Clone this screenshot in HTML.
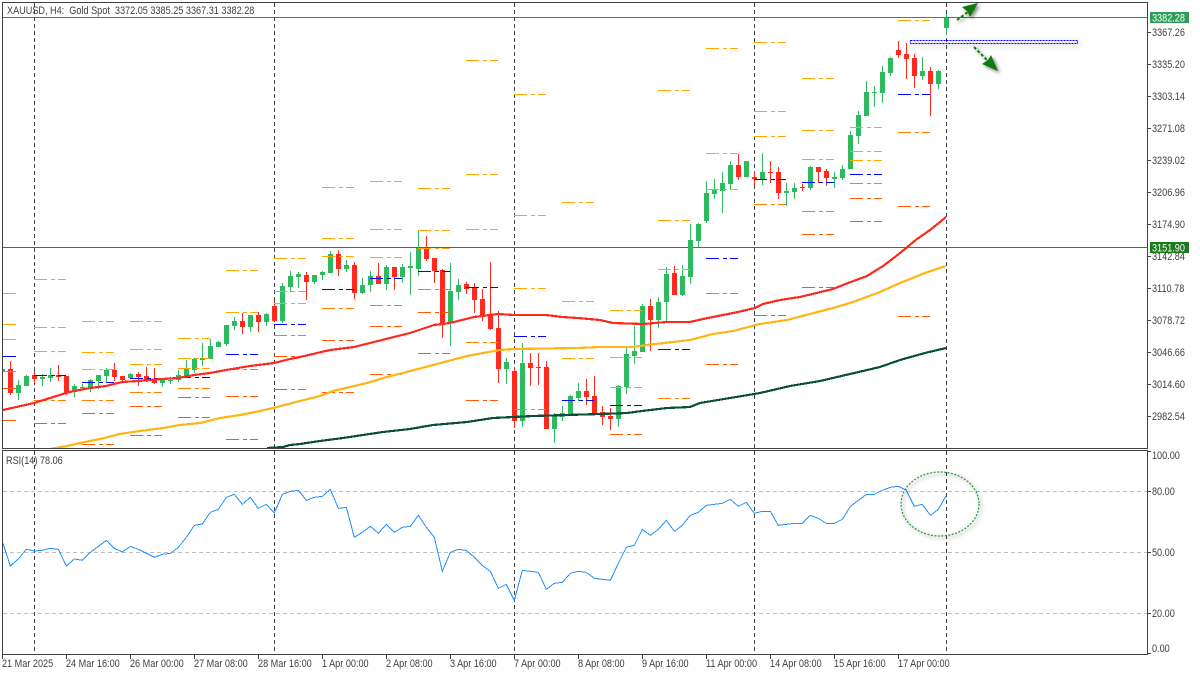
<!DOCTYPE html>
<html><head><meta charset="utf-8"><title>XAUUSD H4</title>
<style>
html,body{margin:0;padding:0;background:#fff;width:1200px;height:675px;overflow:hidden}
svg{display:block}
text{font-family:"Liberation Sans",sans-serif;font-size:11px;fill:#404040;transform-box:fill-box;transform-origin:0 50%;transform:scaleX(.83)}
</style></head><body>
<svg width="1200" height="675" viewBox="0 0 1200 675" xmlns="http://www.w3.org/2000/svg">
<defs>
<filter id="s" x="-30%" y="-800%" width="160%" height="1700%"><feDropShadow dx="2" dy="2" stdDeviation="2.6" flood-color="#000" flood-opacity=".45"/></filter>
<filter id="t" x="-60%" y="-60%" width="220%" height="220%"><feDropShadow dx="2" dy="2" stdDeviation="1.8" flood-color="#000" flood-opacity=".5"/></filter>
<clipPath id="m"><rect x="3" y="3" width="1144" height="445"/></clipPath>
</defs>
<rect width="1200" height="675" fill="#fff"/>

<!-- RSI levels -->
<path d="M3 491.5H1147M3 552.5H1147M3 613.5H1147" stroke="#c0c0c0" stroke-dasharray="4 3" fill="none" shape-rendering="crispEdges"/>

<!-- vertical grid -->
<path d="M34.5 3V654M274.5 3V654M514.5 3V654M754.5 3V654M946.5 3V654" stroke="#404040" stroke-dasharray="4 3" fill="none" shape-rendering="crispEdges"/>

<g clip-path="url(#m)" fill="none" shape-rendering="crispEdges">
<!-- horizontal price lines -->
<path d="M3 17.5H1147" stroke="#2e8b57"/>
<path d="M3 247.5H1147" stroke="#228b22"/>

<!-- green wicks -->
<path stroke="#2ebb5f" d="M18.5 380V400M26.5 375V386M42.5 374V386M50.5 368V382M74.5 384V397M82.5 384V389M90.5 379V392M98.5 375V389M106.5 368V383M130.5 373V379M162.5 378V387M170.5 377V384M178.5 370V382M186.5 360V376M194.5 358V373M202.5 343V366M210.5 339V359M218.5 341V347M226.5 325V346M234.5 317V330M250.5 315V332M266.5 313V326M282.5 283V323M290.5 271V292M298.5 272V288M314.5 275V284M322.5 271V280M330.5 251V273M346.5 260V272M362.5 278V294M370.5 271V292M386.5 265V290M402.5 264V283M410.5 252V295M418.5 231V276M450.5 263V346M458.5 279V300M506.5 358V384M522.5 343V427M554.5 413V443M562.5 406V421M570.5 395V415M578.5 383V401M618.5 385V427M626.5 348V394M634.5 326V364M642.5 304V352M658.5 297V328M666.5 267V321M682.5 265V296M690.5 224V284M698.5 223V247M706.5 181V223M714.5 179V199M722.5 172V213M730.5 161V190M762.5 153V185M786.5 183V206M794.5 183V199M810.5 166V190M834.5 172V188M842.5 165V180M850.5 131V169M858.5 111V144M866.5 81V116M874.5 86V107M882.5 66V103M890.5 57V76M922.5 57V80M938.5 70V89M946.5 14V35"/>
<!-- green bodies -->
<path stroke="#2ebb5f" stroke-width="5" d="M18.5 385V393M26.5 376V386M42.5 377V379M50.5 375V378M74.5 386V392M82.5 387V388M90.5 380V388M98.5 375V381M106.5 370V376M130.5 374V378M162.5 380V383M170.5 380V381M178.5 375V380M186.5 369V376M194.5 359V370M202.5 358V360M210.5 346V359M218.5 342V347M226.5 325V344M234.5 321V326M250.5 315V327M266.5 314V322M282.5 286V321M290.5 276V287M298.5 274V277M314.5 275V282M322.5 272V275M330.5 254V273M346.5 265V269M362.5 285V293M370.5 276V285M386.5 267V284M402.5 267V277M410.5 266V268M418.5 248V269M450.5 291V323M458.5 285V292M506.5 362V369M522.5 363V421M554.5 415V429M562.5 413V417M570.5 396V415M578.5 391V398M618.5 386V419M626.5 354V387M634.5 351V356M642.5 306V352M658.5 302V320M666.5 274V302M682.5 276V295M690.5 240V277M698.5 224V241M706.5 193V221M714.5 190V194M722.5 183V191M730.5 165V184M746.5 161V177M762.5 172V179M786.5 191V193M794.5 188V192M810.5 167V188M834.5 177V179M842.5 169V178M850.5 135V169M858.5 115V136M866.5 92V116M874.5 92V93M882.5 72V93M890.5 58V73M922.5 71V76M938.5 71V84M946.5 18V28M2.5 369V371"/>
<!-- red wicks -->
<path stroke="#ff2a1f" d="M10.5 361V395M34.5 371V383M58.5 365V381M66.5 376V395M114.5 363V381M122.5 376V383M138.5 372V386M146.5 367V382M154.5 368V384M242.5 313V334M258.5 312V332M274.5 301V321M306.5 272V300M338.5 250V276M354.5 262V299M378.5 263V284M394.5 267V290M426.5 236V261M434.5 258V283M442.5 269V338M466.5 282V294M474.5 283V313M482.5 289V321M490.5 262V330M498.5 311V383M514.5 367V428M530.5 353V386M538.5 353V385M546.5 361V429M586.5 379V405M594.5 376V414M602.5 406V425M610.5 408V430M650.5 299V351M674.5 266V295M738.5 154V180M754.5 171V186M770.5 161V183M778.5 167V199M802.5 184V191M818.5 167V183M826.5 169V186M898.5 41V58M906.5 43V79M914.5 54V88M930.5 67V116"/>
<!-- red bodies -->
<path stroke="#ff2a1f" stroke-width="5" d="M10.5 369V393M34.5 375V379M58.5 375V377M66.5 376V393M114.5 370V377M122.5 376V380M138.5 374V377M146.5 376V380M154.5 380V383M242.5 321V327M258.5 315V322M274.5 306V321M306.5 275V282M338.5 254V269M354.5 265V293M378.5 276V284M394.5 267V277M426.5 248V259M434.5 258V271M442.5 270V323M466.5 284V289M474.5 288V300M482.5 299V317M490.5 314V329M498.5 328V369M514.5 371V421M530.5 363V368M538.5 367V368M546.5 367V429M586.5 391V397M594.5 396V414M602.5 412V417M610.5 416V419M650.5 306V320M674.5 273V295M738.5 165V177M754.5 177V179M770.5 172V173M778.5 172V193M802.5 187V188M818.5 167V172M826.5 171V178M898.5 50V55M906.5 54V59M914.5 58V76M930.5 71V84"/>

<!-- pivot levels -->
<g stroke-dasharray="13 4 4 3 8">
<path stroke="#ffa500" d="M3 293.5h14M3 324.5h14M3 339.5h14M34 279.5h32M34 327.5h32M34 351.5h32M82 321.5h32M82 352.5h32M82 369.5h32M130 321.5h32M130 349.5h32M130 364.5h32M178 338.5h32M178 358.5h32M178 368.5h32M226 270.5h32M226 312.5h32M274 258.5h32M274 291.5h32M274 303.5h32M322 187.5h32M322 238.5h32M322 256.5h32M370 181.5h32M370 229.5h32M370 257.5h32M418 188.5h32M418 230.5h32M418 248.5h32M466 60.5h32M466 174.5h32M466 229.5h32M514 94.5h32M514 215.5h32M514 288.5h32M562 202.5h32M562 301.5h32M562 358.5h32M610 310.5h32M610 357.5h32M610 387.5h32M658 90.5h32M658 220.5h32M658 269.5h32M706 48.5h32M706 153.5h32M706 189.5h32M754 42.5h32M754 111.5h32M754 136.5h32M802 78.5h32M802 130.5h32M802 159.5h32M850 127.5h32M850 151.5h32M850 160.5h32M898 20.5h32"/>
<path stroke="#ff8000" d="M3 371.5h14M34 400.5h32M82 400.5h32M130 392.5h32M178 388.5h32M226 369.5h32M274 335.5h32M322 308.5h32M370 305.5h32M418 289.5h32M466 342.5h32M514 409.5h32M658 398.5h32M706 293.5h32M754 204.5h32M802 211.5h32M850 183.5h32M898 132.5h32"/>
<path stroke="#ff5500" d="M3 388.5h14M3 420.5h14M34 423.5h32M82 413.5h32M82 444.5h32M130 406.5h32M130 435.5h32M178 397.5h32M178 417.5h32M226 396.5h32M226 439.5h32M274 356.5h32M274 389.5h32M322 340.5h32M322 392.5h32M370 326.5h32M370 374.5h32M418 312.5h32M418 353.5h32M466 400.5h32M610 434.5h32M706 364.5h32M754 315.5h32M802 234.5h32M802 287.5h32M850 198.5h32M850 221.5h32M898 206.5h32M898 316.5h32"/>
<path stroke="#0000ff" d="M3 356.5h14M34 375.5h32M82 382.5h32M130 378.5h32M178 377.5h32M226 354.5h32M274 324.5h32M322 289.5h32M370 278.5h32M418 271.5h32M466 287.5h32M514 336.5h32M562 400.5h32M610 405.5h32M658 349.5h32M706 258.5h32M754 179.5h32M802 182.5h32M850 174.5h32M898 94.5h32"/>
</g>

<!-- moving averages -->
<polyline stroke="#0b4f3a" stroke-width="2.2" points="267,448 283,447 290,445 300,444 320,441 343,438 383,432 410,429 433,425 467,422 493,418 533,416 600,414 627,413 642,411 667,408 690,407 700,403 730,398 760,393 790,386 820,381 850,374 880,367 900,360 925,353 946,348"/>
<polyline stroke="#ffb514" stroke-width="2.2" points="50,449 67,446 80,443 100,439 120,434 140,431 163,428 180,425 200,423 220,418 240,415 260,411 273,408 300,401 320,396 333,391 367,383 387,377 403,373 433,365 467,356 483,353 500,350 513,349 577,348 600,347 633,347 647,345 690,340 713,334 733,331 760,324 787,320 833,308 853,302 880,292 900,283 925,273 946,266"/>
<polyline stroke="#ff2a1f" stroke-width="2.2" points="3,410 34,403 50,398 66,393 74,391 90,388 106,386 122,382 138,381 162,379 178,378 194,375 210,373 226,370 250,366 274,363 290,359 300,357 330,350 354,347 378,341 410,333 434,325 450,323 474,317 498,314 514,315 546,315 562,317 578,318 600,320 613,323 643,324 667,322 690,322 703,319 738,312 755,308 763,304 780,300 800,297 833,289 848,283 867,276 883,266 895,257 900,253 917,239 930,230 940,222 946,217"/>
</g>

<!-- RSI line -->
<g fill="none" stroke="#1e90ff" shape-rendering="crispEdges">
<polyline transform="translate(0 450) scale(.33333)" stroke-width="3" points="9,280 31,348 55,327 79,298 103,303 127,301 151,295 175,298 199,348 223,327 247,331 271,307 295,289 319,271 343,295 367,306 391,289 415,298 439,310 463,322 487,313 511,310 535,292 559,262 583,226 607,222 631,187 655,178 679,142 703,133 727,163 751,142 775,175 799,163 823,189 847,133 871,124 895,121 919,151 943,142 967,139 991,118 1015,175 1039,172 1063,262 1087,247 1111,229 1135,250 1159,223 1183,247 1207,232"/>
<polyline transform="translate(400 450) scale(.33333)" stroke-width="3" points="7,232 31,229 55,196 79,232 103,262 127,364 151,307 175,298 199,301 223,322 247,346 271,364 295,415 319,403 343,451 367,361 391,364 415,367 439,418 463,400 487,397 511,370 535,364 559,367 583,385 607,388 631,391 655,340 679,292 703,286 727,238 751,256 775,238 799,211 823,244 847,226 871,196 895,187 919,166 943,163 967,160 991,148 1015,169 1039,157 1063,190 1087,184 1111,184 1135,226 1159,223 1183,220 1207,220"/>
<polyline transform="translate(800 450) scale(.33333)" stroke-width="3" points="7,220 31,196 55,205 79,220 103,220 127,208 151,169 175,151 199,133 223,133 247,121 271,112 295,109 319,121 343,169 367,163 391,196 415,178 439,136"/>
</g>

<!-- annotations -->
<ellipse cx="940" cy="504" rx="39" ry="32" fill="none" stroke="#1f9a3a" stroke-width="1.2" stroke-dasharray="2 1.5" filter="url(#t)"/>
<rect x="910.500" y="40.500" width="167" height="3" fill="none" stroke="#0000ff" stroke-dasharray="2 1" shape-rendering="crispEdges" filter="url(#s)"/>
<g filter="url(#t)">
<path d="M957 20L968 12" stroke="#0a7a0a" stroke-width="2" stroke-dasharray="3 2" fill="none"/>
<path d="M978 3L962 7L967.500 11.500L970 17Z" fill="#0a7a0a"/>
<path d="M974 47L987 60" stroke="#0a7a0a" stroke-width="2" stroke-dasharray="3 2" fill="none"/>
<path d="M998 71L982 64L988 60L991 55Z" fill="#0a7a0a"/>
</g>

<!-- frames and ticks -->
<path d="M2.500 2.500H1147.500V448.500H2.500ZM2.500 450.500H1147.500V654.500H2.500Z" fill="none" stroke="#404040" shape-rendering="crispEdges"/>
<path stroke="#404040" fill="none" shape-rendering="crispEdges" d="M1148 32.500h3M1148 64.500h3M1148 96.500h3M1148 128.500h3M1148 160.500h3M1148 192.500h3M1148 224.500h3M1148 256.500h3M1148 288.500h3M1148 320.500h3M1148 352.500h3M1148 384.500h3M1148 416.500h3M1148 451.500h3M1148 491.500h3M1148 552.500h3M1148 613.500h3M1148 653.500h3M2.500 655v4M66.500 655v4M130.500 655v4M194.500 655v4M258.500 655v4M322.500 655v4M386.500 655v4M450.500 655v4M514.500 655v4M578.500 655v4M642.500 655v4M706.500 655v4M770.500 655v4M834.500 655v4M898.500 655v4"/>

<!-- price labels -->
<rect x="1150" y="12" width="39" height="11" fill="#2e9e5a"/>
<rect x="1150" y="242" width="39" height="11" fill="#1c7a1c"/>
<text x="1152" y="21.500" style="fill:#fff">3382.28</text>
<text x="1152" y="251.500" style="fill:#fff">3151.90</text>
<text x="1152" y="36">3367.26</text>
<text x="1152" y="68">3335.20</text>
<text x="1152" y="100">3303.14</text>
<text x="1152" y="132">3271.08</text>
<text x="1152" y="164">3239.02</text>
<text x="1152" y="196">3206.96</text>
<text x="1152" y="228">3174.90</text>
<text x="1152" y="260">3142.84</text>
<text x="1152" y="292">3110.78</text>
<text x="1152" y="324">3078.72</text>
<text x="1152" y="356">3046.66</text>
<text x="1152" y="388">3014.60</text>
<text x="1152" y="420">2982.54</text>
<text x="1152" y="459">100.00</text>
<text x="1152" y="495">80.00</text>
<text x="1152" y="556">50.00</text>
<text x="1152" y="617">20.00</text>
<text x="1152" y="652">0.00</text>

<!-- header text -->
<text x="7" y="14" xml:space="preserve">XAUUSD, H4:  Gold Spot  3372.05 3385.25 3367.31 3382.28</text>
<text x="6" y="464">RSI(14) 78.06</text>

<!-- time labels -->
<text x="2" y="667">21 Mar 2025</text>
<text x="66" y="667">24 Mar 16:00</text>
<text x="130" y="667">26 Mar 00:00</text>
<text x="194" y="667">27 Mar 08:00</text>
<text x="258" y="667">28 Mar 16:00</text>
<text x="322" y="667">1 Apr 00:00</text>
<text x="386" y="667">2 Apr 08:00</text>
<text x="450" y="667">3 Apr 16:00</text>
<text x="514" y="667">7 Apr 00:00</text>
<text x="578" y="667">8 Apr 08:00</text>
<text x="642" y="667">9 Apr 16:00</text>
<text x="706" y="667">11 Apr 00:00</text>
<text x="770" y="667">14 Apr 08:00</text>
<text x="834" y="667">15 Apr 16:00</text>
<text x="898" y="667">17 Apr 00:00</text>
</svg>
</body></html>
